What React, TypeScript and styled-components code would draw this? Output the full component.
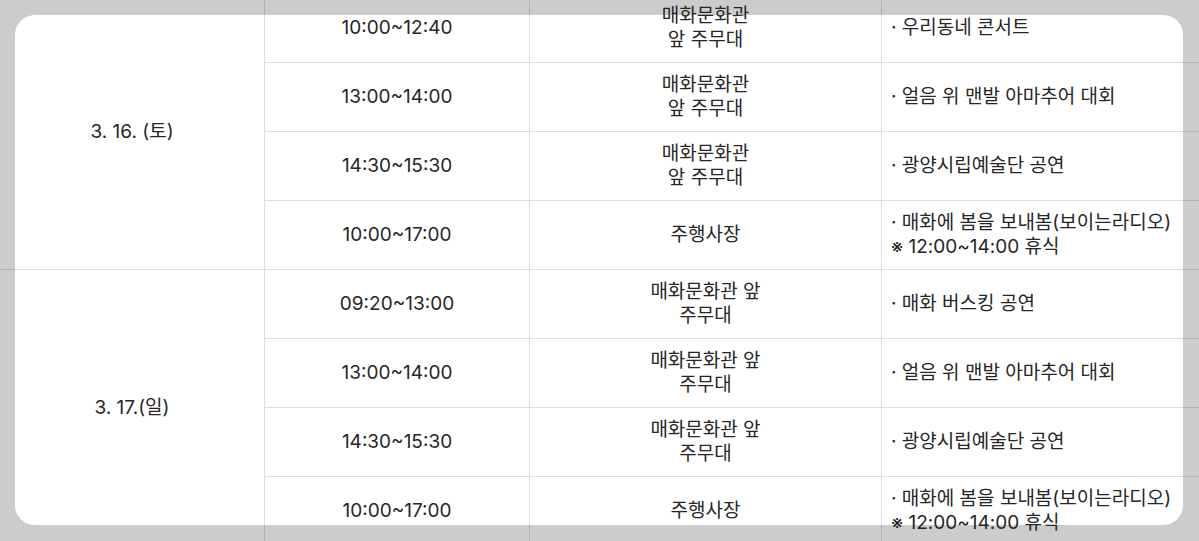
import styled, { createGlobalStyle } from "styled-components";

const GlobalStyle = createGlobalStyle`
  html, body {
    margin: 0;
    padding: 0;
    background: #cccccc;
  }
  body {
    font-family: "Inter", "Noto Sans CJK KR", sans-serif;
    color: #262626;
  }
`;

type Program = {
  time: string;
  place: string[];
  content: string[];
};

type Day = {
  date: string;
  programs: Program[];
};

const days: Day[] = [
  {
    date: "3. 16. (토)",
    programs: [
      { time: "10:00~12:40", place: ["매화문화관", "앞 주무대"], content: ["· 우리동네 콘서트"] },
      { time: "13:00~14:00", place: ["매화문화관", "앞 주무대"], content: ["· 얼음 위 맨발 아마추어 대회"] },
      { time: "14:30~15:30", place: ["매화문화관", "앞 주무대"], content: ["· 광양시립예술단 공연"] },
      {
        time: "10:00~17:00",
        place: ["주행사장"],
        content: ["· 매화에 봄을 보내봄(보이는라디오)", "※ 12:00~14:00 휴식"],
      },
    ],
  },
  {
    date: "3. 17.(일)",
    programs: [
      { time: "09:20~13:00", place: ["매화문화관 앞", "주무대"], content: ["· 매화 버스킹 공연"] },
      { time: "13:00~14:00", place: ["매화문화관 앞", "주무대"], content: ["· 얼음 위 맨발 아마추어 대회"] },
      { time: "14:30~15:30", place: ["매화문화관 앞", "주무대"], content: ["· 광양시립예술단 공연"] },
      {
        time: "10:00~17:00",
        place: ["주행사장"],
        content: ["· 매화에 봄을 보내봄(보이는라디오)", "※ 12:00~14:00 휴식"],
      },
    ],
  },
];

const App = () => {
  return (
    <>
      <GlobalStyle />
      <Stage>
        <Card />
        <ScheduleGrid>
          {days.map((day) => (
            <DayGroup key={day.date}>
              <DateCell $span={day.programs.length}>{day.date}</DateCell>
              {day.programs.map((p, i) => (
                <ProgramRow key={i}>
                  <Cell>{p.time}</Cell>
                  <Cell>
                    {p.place.map((line, j) => (
                      <Line key={j}>{line}</Line>
                    ))}
                  </Cell>
                  <Cell $left>
                    {p.content.map((line, j) => (
                      <Line key={j}>{line}</Line>
                    ))}
                  </Cell>
                </ProgramRow>
              ))}
            </DayGroup>
          ))}
        </ScheduleGrid>
      </Stage>
    </>
  );
};

const Stage = styled.div`
  display: grid;
  grid-template-rows: 541px;
  height: 541px;
  overflow: hidden;
`;

const Card = styled.div`
  grid-area: 1 / 1;
  margin: 15px 16px 16px 15px;
  background: #ffffff;
  border-radius: 20px;
`;

const ScheduleGrid = styled.div`
  grid-area: 1 / 1;
  margin-top: -6px;
  display: grid;
  grid-template-columns: 265px 265px 352px 317px;
  grid-auto-rows: 69px;
  align-self: start;
`;

const DayGroup = styled.div`
  display: contents;
`;

const ProgramRow = styled.div`
  display: contents;
`;

const Cell = styled.div<{ $left?: boolean }>`
  box-sizing: border-box;
  display: flex;
  flex-direction: column;
  justify-content: center;
  align-items: ${(p) => (p.$left ? "flex-start" : "center")};
  text-align: ${(p) => (p.$left ? "left" : "center")};
  padding: ${(p) => (p.$left ? "0 8px 0 9px" : "0 10px")};
  border-bottom: 1px solid rgba(0, 0, 0, 0.13);
  border-right: ${(p) => (p.$left ? "none" : "1px solid rgba(0, 0, 0, 0.13)")};
  font-size: 19px;
  line-height: 24px;
  white-space: nowrap;
  grid-column: ${(p) => (p.$left ? "4" : "auto")};
`;

const DateCell = styled(Cell)<{ $span: number }>`
  grid-column: 1;
  grid-row: span ${(p) => p.$span};
`;

const Line = styled.span`
  display: block;
`;

export default App;
